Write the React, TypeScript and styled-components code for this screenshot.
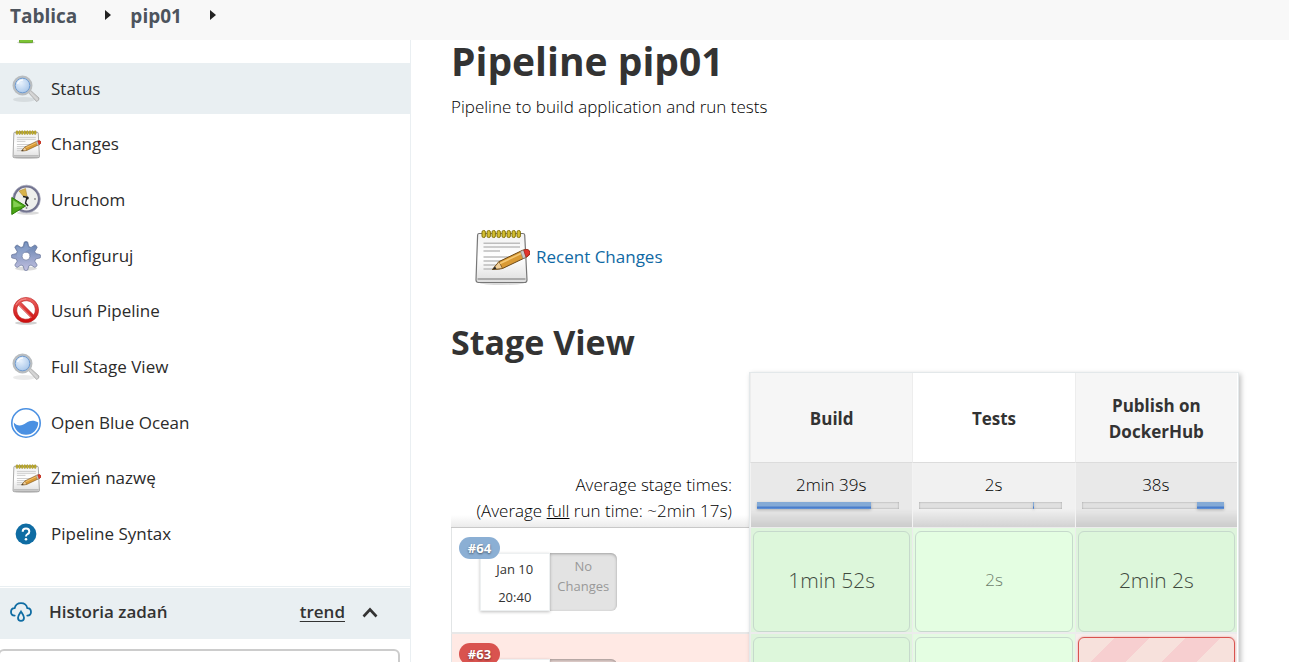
import React from 'react';
import styled, { createGlobalStyle, css } from 'styled-components';

const GlobalStyle = createGlobalStyle`
  *, *::before, *::after { box-sizing: border-box; }
  body {
    margin: 0;
    overflow: hidden;
    background: #fff;
    color: #333;
    font-family: "Open Sans", "Noto Sans", sans-serif;
    font-size: 17px;
    line-height: 26px;
  }
`;

const Page = styled.div`
  display: flex;
  flex-direction: column;
  height: 100vh;
  overflow: hidden;
`;

const Breadcrumbs = styled.nav`
  position: relative;
  z-index: 2;
  flex: none;
  display: flex;
  align-items: flex-start;
  height: 40px;
  padding: 3px 10px;
  background: #f8f8f8;
`;

const Crumb = styled.a`
  color: #4d545d;
  font-size: 19px;
  font-weight: 700;
  text-decoration: none;
`;

const CrumbArrow = styled.svg`
  width: 6px;
  height: 10px;
  margin: 7px 19px 0 28px;
  fill: #222;
`;

const Columns = styled.div`
  flex: 1;
  min-height: 0;
  display: grid;
  grid-template-columns: 411px minmax(0, 1fr);
`;

const Sidebar = styled.aside`
  display: flex;
  flex-direction: column;
  min-height: 0;
  border-right: 1px solid #eaeff2;
`;

const Tasks = styled.nav`
  flex: none;
  display: flex;
  flex-direction: column;
  justify-content: space-between;
  height: 552px;
  margin: -33px 0 27px;
`;

const Task = styled.a<{ $active?: boolean }>`
  display: flex;
  align-items: center;
  gap: 10px;
  height: 51px;
  padding: 1px 0 0 11px;
  background: ${(p) => (p.$active ? '#e9eff2' : 'transparent')};
  color: #2b2b2b;
  font-weight: 500;
  text-decoration: none;
`;

const TaskIcon = styled.span`
  display: flex;
  align-items: center;
  justify-content: center;
  width: 30px;
  height: 32px;

  svg { flex: none; }
`;

const History = styled.section`
  flex: none;
  border-top: 1px solid #e9eff2;
  padding-top: 1px;
`;

const HistoryHeader = styled.header`
  display: flex;
  align-items: center;
  height: 51px;
  padding: 0 32px 3px 10px;
  background: #e9eff2;
  font-weight: 600;
`;

const HistoryTitle = styled.h2`
  flex: 1;
  margin: 0 0 0 17px;
  font-size: 17px;
  font-weight: 600;
`;

const TrendLink = styled.a`
  margin-right: 17px;
  color: #333;
  text-underline-offset: 3px;
`;

const CollapseButton = styled.button`
  display: flex;
  padding: 0;
  border: 0;
  background: none;
  color: #333;
`;

const FilterInput = styled.input`
  display: block;
  width: 402px;
  height: 40px;
  margin: 10px 0 0 -2px;
  border: 2px solid #ccc;
  border-radius: 6px;
  background: #fff;
`;

const Main = styled.main`
  min-width: 0;
  padding: 0 40px;
`;

const Title = styled.h1`
  margin: 0 0 12px;
  font-size: 39px;
  line-height: 42px;
`;

const Description = styled.p`
  margin: 0;
  color: #000;
  font-weight: 300;
`;

const RecentChanges = styled.a`
  display: flex;
  align-items: center;
  gap: 6px;
  width: max-content;
  margin: 109px 0 35px 23px;
  color: #0f69a4;
  font-weight: 500;
  text-decoration: none;
`;

const SectionTitle = styled.h2`
  margin: 0;
  font-size: 34px;
  line-height: 44px;
`;

const StageTableFrame = styled.div`
  position: relative;
  width: max-content;
  margin-top: 9px;

  &::after {
    content: "";
    position: absolute;
    inset: -1px -2px -1px 298px;
    border: 1px solid #e3e8ea;
    box-shadow: 2px 2px 5px rgba(0, 0, 0, 0.25);
    pointer-events: none;
  }
`;

const StageTable = styled.table`
  width: 786px;
  table-layout: fixed;
  border-collapse: separate;
  border-spacing: 0;
  text-align: center;
`;

const RunColumn = styled.col`
  width: 299px;
`;

const StageHead = styled.th<{ $shaded: boolean }>`
  height: 90px;
  padding: 3px 24px 0;
  border-left: 1px solid #ededed;
  border-bottom: 1px solid #dcdcdc;
  background: ${(p) => (p.$shaded ? '#f6f6f6' : '#fff')};
  font-weight: 700;
`;

const AverageLabel = styled.td`
  height: 65px;
  padding: 9px 18px 0 0;
  border-bottom: 1px solid #c8c8c8;
  background: linear-gradient(to bottom, transparent 52px, #ebebeb);
  color: #000;
  font-weight: 300;
  text-align: right;
  vertical-align: top;
  white-space: nowrap;
`;

const AverageCell = styled.td<{ $shaded: boolean }>`
  height: 65px;
  padding: 9px 13px 0 6px;
  border-left: 1px solid #f3f3f3;
  border-bottom: 1px solid #ececec;
  background: linear-gradient(to bottom, transparent 46px, rgba(0, 0, 0, 0.13)),
    ${(p) => (p.$shaded ? '#e9e9e9' : '#f1f1f1')};
  color: #000;
  font-weight: 300;
  vertical-align: top;
`;

const AverageTime = styled.div`
  padding-left: 6px;
`;

const Track = styled.div`
  height: 7px;
  margin-top: 4px;
  background: #e0e0e0;
  box-shadow: inset 0 0 2px rgba(0, 0, 0, 0.35);
`;

const TrackFill = styled.div`
  height: 7px;
  min-width: 1px;
  background: linear-gradient(to bottom, #84aad6 0 4px, #4a7dcb 5px 6px, #6fa0de);
  box-shadow: 0 1px 3px rgba(0, 0, 0, 0.25);
`;

const RunCell = styled.td<{ $failed: boolean }>`
  height: 106px;
  padding: 0;
  border-left: 1px solid #e2e5e6;
  border-bottom: 2px solid #e8e8e8;
  background: ${(p) => (p.$failed ? '#ffe9e4' : '#fff')};
  vertical-align: top;
`;

const RunBox = styled.div`
  position: relative;
  display: flex;
  width: 137px;
  height: 58px;
  margin: 25px 0 0 28px;
  font-size: 13px;
`;

const RunBadge = styled.a<{ $failed: boolean }>`
  position: absolute;
  top: -16px;
  left: -21px;
  width: 41px;
  height: 22px;
  border-radius: 11px;
  background: ${(p) => (p.$failed ? '#d9534f' : '#8bafd4')};
  color: #fff;
  font-size: 13px;
  font-weight: 700;
  line-height: 22px;
  text-align: center;
  text-decoration: none;
  text-shadow: 0 1px 2px rgba(0, 0, 0, 0.5);
`;

const RunDate = styled.div`
  flex: 1;
  padding-top: 1px;
  border: 1px solid #edf0f1;
  background: #fff;
  box-shadow: 0 1px 3px rgba(0, 0, 0, 0.25);
  line-height: 28px;
`;

const RunChanges = styled.div<{ $failed: boolean }>`
  flex: 1;
  padding-top: 3px;
  border-radius: 0 6px 6px 0;
  background: ${(p) => (p.$failed ? '#e2d0cd' : '#e3e3e3')};
  box-shadow: inset 0 1px 3px rgba(0, 0, 0, 0.3);
  color: #999;
  line-height: 20px;
`;

const StageCell = styled.td<{ $shaded: boolean; $failed: boolean }>`
  height: 106px;
  padding: 3px 2px 0;
  border-left: 1px solid #ececec;
  border-bottom: 2px solid #ececec;
  background: ${(p) => (p.$failed ? '#f6eeec' : p.$shaded ? '#def4dc' : '#e4fbe2')};
`;

const StageResult = styled.div<{ $shaded: boolean; $failed: boolean; $size: 'small' | 'large' }>`
  display: flex;
  align-items: center;
  justify-content: center;
  height: 101px;
  padding-bottom: 3px;
  border: 1px solid #c6d9cc;
  border-radius: 6px;
  background: ${(p) => (p.$shaded ? '#ddf7db' : '#e4fee2')};
  color: ${(p) => (p.$size === 'large' ? '#3f4a3e' : '#6d7d6b')};
  font-size: ${(p) => (p.$size === 'large' ? 21 : 17)}px;
  font-weight: 300;

  ${(p) =>
    p.$failed &&
    css`
      border-color: #d9534f;
      background: repeating-linear-gradient(135deg, #f7e1dc 0 25px, #f7cfd0 25px 50px);
      box-shadow: 0 0 2px rgba(217, 83, 79, 0.6);
    `}
`;

function MagnifierIcon() {
  return (
    <svg width="30" height="30" viewBox="0 0 30 30" aria-hidden="true">
      <defs>
        <radialGradient id="lens" cx="0.4" cy="0.35" r="0.7">
          <stop offset="0" stopColor="#e8f2fd" />
          <stop offset="1" stopColor="#9dbfe6" />
        </radialGradient>
        <linearGradient id="handle" x1="0" y1="1" x2="1" y2="0">
          <stop offset="0" stopColor="#8b8b8b" />
          <stop offset="0.5" stopColor="#d8d8d8" />
          <stop offset="1" stopColor="#929292" />
        </linearGradient>
      </defs>
      <ellipse cx="13" cy="25.5" rx="11" ry="2.5" fill="#000" opacity="0.08" />
      <path d="M16.5 17.5 L19 15.8 L28 24 Q28.5 26.5 25.5 27.5 Z" fill="url(#handle)" stroke="#999" strokeWidth="0.6" />
      <circle cx="11.5" cy="11.5" r="8.8" fill="url(#lens)" stroke="#b9bdc0" strokeWidth="2.4" />
      <circle cx="11.5" cy="11.5" r="7.3" fill="none" stroke="#6f9bd0" strokeWidth="1" />
      <path d="M6.5 10 Q8 6 12 6" fill="none" stroke="#fff" strokeWidth="1.6" opacity="0.8" />
    </svg>
  );
}

function NotepadIcon({ size }: { size: number }) {
  return (
    <svg width={size} height={size} viewBox="0 0 56 56" aria-hidden="true">
      <defs>
        <linearGradient id="paper" x1="0" y1="0" x2="0" y2="1">
          <stop offset="0" stopColor="#f2f2f2" />
          <stop offset="0.5" stopColor="#fff" />
          <stop offset="1" stopColor="#dedede" />
        </linearGradient>
      </defs>
      <ellipse cx="28" cy="54" rx="22" ry="2" fill="#000" opacity="0.14" />
      <path d="M5 4.5 H49 Q50.5 4.5 50.7 6 L53 51 Q53 53.5 50.5 53.5 H4.5 Q2 53.5 2 51 L3.6 6 Q3.8 4.5 5 4.5 Z" fill="url(#paper)" stroke="#777" strokeWidth="1.2" />
      <path d="M3.5 50 H51.5" stroke="#ababab" strokeWidth="2.2" />
      <path d="M9.5 14.3 H46 M9.5 18 H46 M9.5 22 H26 M9.5 28 H38 M9.5 32 H30 M9.5 36 H27 M9.5 40 H26" stroke="#bdbdbd" strokeWidth="1.4" />
      <g fill="#d4bf31" stroke="#82720d" strokeWidth="1">
        {[8, 13, 18, 23, 28, 33, 38, 43].map((x) => (
          <rect key={x} x={x} y="1.5" width="3.4" height="7" rx="1.6" />
        ))}
      </g>
      <path d="M18.5 40.5 L25 32.6 L48.5 21.3 Q55 19 56 23.5 Q56.4 26 53 27.8 L28.5 39.5 Z" fill="#d99a35" stroke="#6b4715" strokeWidth="1" />
      <path d="M18.5 40.5 L25 32.6 L28.5 39.5 Z" fill="#f0cf9a" stroke="#6b4715" strokeWidth="0.7" />
      <path d="M18.5 40.5 L21 37.5 L22.5 39.7 Z" fill="#222" />
      <path d="M26 34.5 L48.5 23.8" stroke="#f5c974" strokeWidth="1.6" />
      <path d="M46.5 22.4 L49.7 21 L52 28.2 L49 29.6 Z" fill="#c8c8c8" stroke="#777" strokeWidth="0.5" />
      <path d="M49.7 21 Q55 19 56 23.5 Q56.2 26 52 28.2 Z" fill="#e2342c" stroke="#9e1c17" strokeWidth="0.6" />
    </svg>
  );
}

function ClockIcon() {
  return (
    <svg width="30" height="32" viewBox="0 0 30 32" aria-hidden="true">
      <ellipse cx="17" cy="29" rx="11" ry="1.8" fill="#000" opacity="0.14" />
      <circle cx="15.5" cy="15" r="12.6" fill="#eeefec" stroke="#72738f" strokeWidth="2.4" />
      <circle cx="15.5" cy="15" r="13.9" fill="none" stroke="#a9aabd" strokeWidth="0.7" />
      <path d="M8 7 L14.5 4.5 L16 12 L12.5 12.5 Z" fill="#d8b34a" stroke="#a5812a" strokeWidth="0.5" />
      <path d="M12 12.5 L17 13.5 M16 13.5 L14.5 19 L17 22" fill="none" stroke="#222" strokeWidth="1.4" />
      <circle cx="16.3" cy="14" r="1.5" fill="#222" />
      <circle cx="24" cy="15" r="0.9" fill="#888" />
      <circle cx="15.5" cy="24" r="0.9" fill="#888" />
      <path d="M0.8 13.5 L14.6 22 L0.8 30.5 Z" fill="#4ba715" stroke="#2c7a06" strokeWidth="1" />
      <path d="M2.2 16.2 L11.6 22 L2.2 23.6 Z" fill="#85cf52" />
    </svg>
  );
}

function GearIcon() {
  return (
    <svg width="30" height="32" viewBox="0 0 30 32" aria-hidden="true">
      <defs>
        <linearGradient id="gear" x1="0" y1="0" x2="0" y2="1">
          <stop offset="0" stopColor="#5d7dac" />
          <stop offset="1" stopColor="#c3c1e1" />
        </linearGradient>
      </defs>
      <ellipse cx="15" cy="28.5" rx="11" ry="2" fill="#000" opacity="0.14" />
      <path
        fill="url(#gear)"
        stroke="#69759a"
        strokeWidth="0.7"
        fillRule="evenodd"
        d="M13.3 2 Q15 0.9 16.7 2 L17.8 6.6 L20 7.5 L23.8 5 Q25.6 5.4 26.2 7.4 L23.8 11.4 L24.7 13.6 L29.2 14.7 Q30 16.3 29.2 17.9 L24.7 19 L23.8 21.2 L26.2 25 Q25.6 27 23.8 27.4 L20 25 L17.8 25.9 L16.7 30 Q15 31 13.3 30 L12.2 25.9 L10 25 L6.2 27.4 Q4.4 27 3.8 25 L6.2 21.2 L5.3 19 L0.8 17.9 Q0 16.3 0.8 14.7 L5.3 13.6 L6.2 11.4 L3.8 7.4 Q4.4 5.4 6.2 5 L10 7.5 L12.2 6.6 Z M15 12.2 A4 4 0 1 0 15 20.2 A4 4 0 1 0 15 12.2 Z"
      />
      <path d="M5.9 13.8 L7 11.4 L5 7.8 L6.3 6.3 L10 8.5 L13.1 7.2 L14 3 Q15 2.6 16 3 L17 7.2 L20 8.5 L23.5 6.6 Q15 10 11 15.5 Q8.5 19.5 6 16 Z" fill="#9db2d6" opacity="0.45" />
    </svg>
  );
}

function ForbiddenIcon() {
  return (
    <svg width="28" height="30" viewBox="0 0 28 30" aria-hidden="true">
      <defs>
        <linearGradient id="ban" x1="0" y1="0" x2="0" y2="1">
          <stop offset="0" stopColor="#ee6a68" />
          <stop offset="0.5" stopColor="#dc3533" />
          <stop offset="1" stopColor="#cc0b0b" />
        </linearGradient>
      </defs>
      <ellipse cx="14" cy="27" rx="11" ry="1.8" fill="#000" opacity="0.18" />
      <path
        fillRule="evenodd"
        fill="url(#ban)"
        stroke="#b81c1c"
        strokeWidth="0.6"
        d="M14 1.4 A12.6 12.6 0 1 0 14 26.6 A12.6 12.6 0 1 0 14 1.4 Z M8.9 6.3 L21.7 19.1 A9.2 9.2 0 0 0 8.9 6.3 Z M6.3 8.9 A9.2 9.2 0 0 0 19.1 21.7 Z"
      />
      <path d="M7 8.9 L19.7 21.4 M4 9 Q7 3 14 3" fill="none" stroke="#f5a3a1" strokeWidth="0.7" />
    </svg>
  );
}

function OceanIcon() {
  return (
    <svg width="32" height="32" viewBox="0 0 32 32" aria-hidden="true">
      <circle cx="16" cy="16" r="14.2" fill="#fff" stroke="#4a90e2" strokeWidth="1.6" />
      <path d="M3.8 15.5 C7 19.5 12 19 16 16 C20 13.2 24 12.8 28.2 15.5 A12.2 12.2 0 0 1 3.8 15.5 Z" fill="#4a90e2" />
    </svg>
  );
}

function HelpIcon() {
  return (
    <svg width="22" height="22" viewBox="0 0 22 22" aria-hidden="true">
      <circle cx="11" cy="11" r="10.4" fill="#0f6ca3" />
      <path d="M7.7 8.7 Q7.7 5.5 11 5.5 Q14.3 5.5 14.3 8.4 Q14.3 10.1 12.6 11 Q11 11.9 11 13.4" fill="none" stroke="#fff" strokeWidth="2" />
      <circle cx="11" cy="16.3" r="1.3" fill="#fff" />
    </svg>
  );
}

function UpArrowIcon() {
  return (
    <svg width="30" height="30" viewBox="0 0 30 30" aria-hidden="true">
      <ellipse cx="15" cy="24.5" rx="9" ry="1.5" fill="#000" opacity="0.16" />
      <path d="M15 2 L26 13 H21.5 V24.5 H8.5 V13 H4 Z" fill="#7cc335" stroke="#5c9f1c" strokeWidth="0.8" />
    </svg>
  );
}

function WeatherIcon() {
  return (
    <svg width="22" height="20" viewBox="0 0 22 20" fill="none" stroke="#0f6ca3" strokeWidth="1.8" strokeLinecap="round" aria-hidden="true">
      <path d="M4.7 13.6 C2.4 13.4 1 11.8 1 9.9 C1 7.8 2.6 6.3 4.6 6.2 C5.4 3 7.9 1.2 11 1.2 C14.1 1.2 16.6 3 17.3 6.1 C19.5 6.2 21 7.9 21 9.9 C21 11.8 19.6 13.4 17.3 13.6" />
      <path d="M11 9.6 C9.6 11.9 8 13.8 8 15.7 C8 17.5 9.3 18.8 11 18.8 C12.7 18.8 14 17.5 14 15.7 C14 13.8 12.4 11.9 11 9.6 Z" />
    </svg>
  );
}

interface TaskItem {
  label: string;
  icon: React.ReactNode;
  active?: boolean;
}

const tasks: TaskItem[] = [
  { label: 'Status', icon: <MagnifierIcon />, active: true },
  { label: 'Changes', icon: <NotepadIcon size={29} /> },
  { label: 'Uruchom', icon: <ClockIcon /> },
  { label: 'Konfiguruj', icon: <GearIcon /> },
  { label: 'Usuń Pipeline', icon: <ForbiddenIcon /> },
  { label: 'Full Stage View', icon: <MagnifierIcon /> },
  { label: 'Open Blue Ocean', icon: <OceanIcon /> },
  { label: 'Zmień nazwę', icon: <NotepadIcon size={29} /> },
  { label: 'Pipeline Syntax', icon: <HelpIcon /> },
];

const stages = [
  { name: 'Build', average: '2min 39s', start: 0, share: 80 },
  { name: 'Tests', average: '2s', start: 80, share: 0 },
  { name: 'Publish on DockerHub', average: '38s', start: 81, share: 19 },
];

interface Result {
  time?: string;
  size?: 'small' | 'large';
  failed?: boolean;
}

interface Run {
  id: string;
  failed: boolean;
  day?: string;
  hour?: string;
  changes?: string;
  results: Result[];
}

const runs: Run[] = [
  {
    id: '#64',
    failed: false,
    day: 'Jan 10',
    hour: '20:40',
    changes: 'No Changes',
    results: [{ time: '1min 52s', size: 'large' }, { time: '2s' }, { time: '2min 2s', size: 'large' }],
  },
  { id: '#63', failed: true, results: [{}, {}, { failed: true }] },
];

export default function App() {
  return (
    <>
      <GlobalStyle />
      <Page>
        <Breadcrumbs>
          {['Tablica', 'pip01'].map((crumb) => (
            <React.Fragment key={crumb}>
              <Crumb href="#">{crumb}</Crumb>
              <CrumbArrow viewBox="0 0 6 10" aria-hidden="true">
                <path d="M0 0 L6 5 L0 10 Z" />
              </CrumbArrow>
            </React.Fragment>
          ))}
        </Breadcrumbs>
        <Columns>
          <Sidebar>
            <Tasks>
              <Task href="#" aria-label="Tablica">
                <TaskIcon><UpArrowIcon /></TaskIcon>
              </Task>
              {tasks.map((task) => (
                <Task key={task.label} href="#" $active={task.active}>
                  <TaskIcon>{task.icon}</TaskIcon>
                  {task.label}
                </Task>
              ))}
            </Tasks>
            <History>
              <HistoryHeader>
                <WeatherIcon />
                <HistoryTitle>Historia zadań</HistoryTitle>
                <TrendLink href="#">trend</TrendLink>
                <CollapseButton type="button" aria-label="Historia zadań" aria-expanded="true">
                  <svg width="16" height="12" viewBox="0 0 16 12" fill="none" stroke="currentColor" strokeWidth="2.6" aria-hidden="true">
                    <path d="M1.5 10.5 L8 3.5 L14.5 10.5" />
                  </svg>
                </CollapseButton>
              </HistoryHeader>
              <FilterInput type="text" aria-label="Historia zadań" />
            </History>
          </Sidebar>
          <Main>
            <Title>Pipeline pip01</Title>
            <Description>Pipeline to build application and run tests</Description>
            <RecentChanges href="#">
              <NotepadIcon size={56} />
              Recent Changes
            </RecentChanges>
            <SectionTitle>Stage View</SectionTitle>
            <StageTableFrame>
              <StageTable>
                <colgroup>
                  <RunColumn />
                  <col />
                  <col />
                  <col />
                </colgroup>
                <thead>
                  <tr>
                    <td />
                    {stages.map((stage, i) => (
                      <StageHead key={stage.name} scope="col" $shaded={i % 2 === 0}>
                        {stage.name}
                      </StageHead>
                    ))}
                  </tr>
                </thead>
                <tbody>
                  <tr>
                    <AverageLabel>
                      Average stage times:
                      <br />
                      (Average <u>full</u> run time: ~2min 17s)
                    </AverageLabel>
                    {stages.map((stage, i) => (
                      <AverageCell key={stage.name} $shaded={i % 2 === 0}>
                        <AverageTime>{stage.average}</AverageTime>
                        <Track>
                          <TrackFill style={{ width: `${stage.share}%`, marginLeft: `${stage.start}%` }} />
                        </Track>
                      </AverageCell>
                    ))}
                  </tr>
                  {runs.map((run) => (
                    <tr key={run.id}>
                      <RunCell $failed={run.failed}>
                        <RunBox>
                          <RunDate>
                            <div>{run.day}</div>
                            <div>{run.hour}</div>
                          </RunDate>
                          <RunChanges $failed={run.failed}>{run.changes}</RunChanges>
                          <RunBadge href="#" $failed={run.failed}>{run.id}</RunBadge>
                        </RunBox>
                      </RunCell>
                      {run.results.map((result, i) => (
                        <StageCell key={stages[i].name} $shaded={i % 2 === 0} $failed={!!result.failed}>
                          <StageResult $shaded={i % 2 === 0} $failed={!!result.failed} $size={result.size ?? 'small'}>
                            {result.time}
                          </StageResult>
                        </StageCell>
                      ))}
                    </tr>
                  ))}
                </tbody>
              </StageTable>
            </StageTableFrame>
          </Main>
        </Columns>
      </Page>
    </>
  );
}
